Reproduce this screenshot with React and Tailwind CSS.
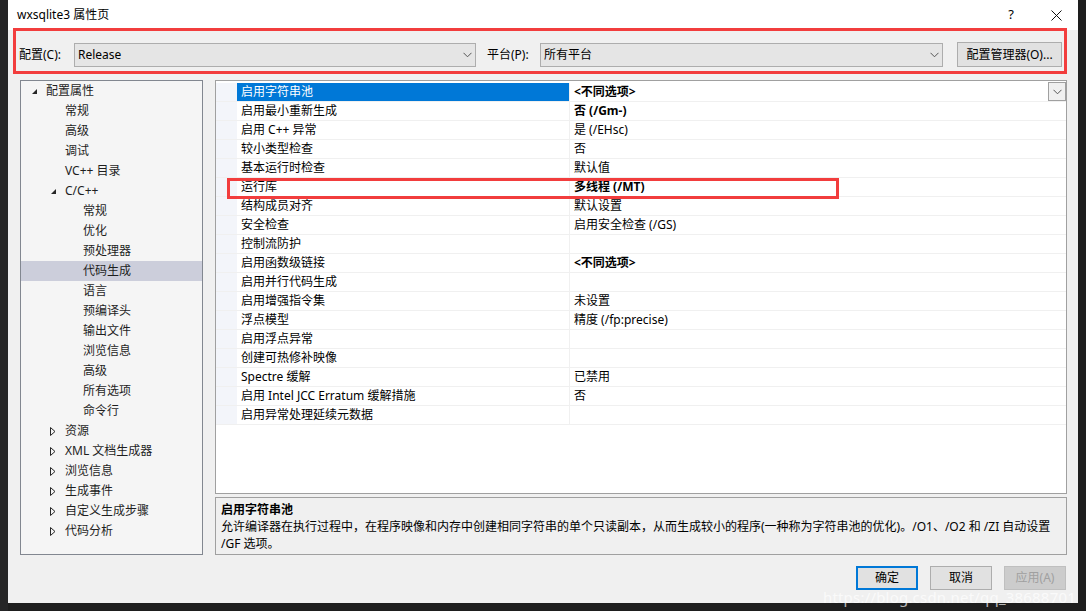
import React from 'react';

const FONT = { fontFamily: '"Noto Sans", "Noto Sans CJK SC", sans-serif' };

const tree = [
  { label: '配置属性', level: 0, arrow: 'open' },
  { label: '常规', level: 1 },
  { label: '高级', level: 1 },
  { label: '调试', level: 1 },
  { label: 'VC++ 目录', level: 1 },
  { label: 'C/C++', level: 1, arrow: 'open' },
  { label: '常规', level: 2 },
  { label: '优化', level: 2 },
  { label: '预处理器', level: 2 },
  { label: '代码生成', level: 2, selected: true },
  { label: '语言', level: 2 },
  { label: '预编译头', level: 2 },
  { label: '输出文件', level: 2 },
  { label: '浏览信息', level: 2 },
  { label: '高级', level: 2 },
  { label: '所有选项', level: 2 },
  { label: '命令行', level: 2 },
  { label: '资源', level: 1, arrow: 'closed' },
  { label: 'XML 文档生成器', level: 1, arrow: 'closed' },
  { label: '浏览信息', level: 1, arrow: 'closed' },
  { label: '生成事件', level: 1, arrow: 'closed' },
  { label: '自定义生成步骤', level: 1, arrow: 'closed' },
  { label: '代码分析', level: 1, arrow: 'closed' },
];

const props = [
  { name: '启用字符串池', value: '<不同选项>', bold: true, selected: true },
  { name: '启用最小重新生成', value: '否 (/Gm-)', bold: true },
  { name: '启用 C++ 异常', value: '是 (/EHsc)' },
  { name: '较小类型检查', value: '否' },
  { name: '基本运行时检查', value: '默认值' },
  { name: '运行库', value: '多线程 (/MT)', bold: true },
  { name: '结构成员对齐', value: '默认设置' },
  { name: '安全检查', value: '启用安全检查 (/GS)' },
  { name: '控制流防护', value: '' },
  { name: '启用函数级链接', value: '<不同选项>', bold: true },
  { name: '启用并行代码生成', value: '' },
  { name: '启用增强指令集', value: '未设置' },
  { name: '浮点模型', value: '精度 (/fp:precise)' },
  { name: '启用浮点异常', value: '' },
  { name: '创建可热修补映像', value: '' },
  { name: 'Spectre 缓解', value: '已禁用' },
  { name: '启用 Intel JCC Erratum 缓解措施', value: '否' },
  { name: '启用异常处理延续元数据', value: '' },
];

function Chevron({ className = '' }) {
  return (
    <svg width="9" height="6" viewBox="0 0 9 6" className={className}>
      <path d="M0.5 0.8 L4.5 4.8 L8.5 0.8" fill="none" stroke="#555" strokeWidth="1" />
    </svg>
  );
}

function Arrow({ type }) {
  if (type === 'open') {
    return (
      <svg width="7" height="7" viewBox="0 0 7 7">
        <path d="M6 1 L6 6 L1 6 Z" fill="#262626" />
      </svg>
    );
  }
  return (
    <svg width="6" height="9" viewBox="0 0 6 9">
      <path d="M0.5 0.5 L5 4.5 L0.5 8.5 Z" fill="none" stroke="#262626" strokeWidth="1" />
    </svg>
  );
}

function Combo({ value, width }) {
  return (
    <div className={`${width} h-[24px] bg-[#e5e5e5] border border-[#adadad] flex items-center justify-between pl-[3px] pr-[3px]`}>
      <span>{value}</span>
      <Chevron />
    </div>
  );
}

function TreeRow({ item }) {
  const pad = ['pl-[10px]', 'pl-[29px]', 'pl-[47px]'][item.level];
  return (
    <div className={`h-[20px] flex items-center ${pad} ${item.selected ? 'bg-[#cccedb]' : ''}`}>
      <span className="w-[15px] flex items-center">{item.arrow && <Arrow type={item.arrow} />}</span>
      <span>{item.label}</span>
    </div>
  );
}

function PropRow({ row, first }) {
  return (
    <div className="h-[19px] flex border-b border-[#f0f0f0]">
      <div className="w-[21px] bg-[#f3f5fa] shrink-0" />
      <div className={`w-[333px] shrink-0 pl-[4px] flex items-center border-r border-[#f0f0f0] ${row.selected ? 'bg-[#0078d7] text-white' : ''}`}>
        {row.name}
      </div>
      <div className={`flex-1 pl-[4px] flex items-center justify-between ${row.bold ? 'font-bold' : ''}`}>
        <span>{row.value}</span>
        {first && (
          <div className="w-[18px] h-[19px] -mt-px border border-[#a0a0a0] bg-[#f0f0f0] flex items-center justify-center">
            <Chevron />
          </div>
        )}
      </div>
    </div>
  );
}

export default function App() {
  return (
    <div className="w-[1086px] h-[611px] bg-[#1e1e1e] flex overflow-hidden text-[12px] text-black" style={FONT}>
      <div className="w-[8px] bg-[#252526]" />
      <div className="relative w-[1070px] h-[603px] bg-[#f0f0f0] flex flex-col">
        {/* title bar */}
        <div className="h-[30px] bg-white flex items-center justify-between pl-[9px] pr-[16px]">
          <span className="text-[12px]">wxsqlite3 属性页</span>
          <div className="flex items-center gap-[37px]">
            <span className="text-[13px]">?</span>
            <svg width="11" height="11" viewBox="0 0 11 11">
              <path d="M0.5 0.5 L10.5 10.5 M10.5 0.5 L0.5 10.5" stroke="#111" strokeWidth="1" />
            </svg>
          </div>
        </div>

        {/* configuration toolbar */}
        <div className="h-[50px] flex items-start pt-[13px] pl-[11px]">
          <span className="h-[24px] flex items-center w-[55px]">配置(C):</span>
          <Combo value="Release" width="w-[402px]" />
          <span className="h-[24px] flex items-center ml-[11px] w-[53px]">平台(P):</span>
          <Combo value="所有平台" width="w-[403px]" />
          <div className="ml-[14px] w-[105px] h-[25px] -mt-px bg-[#e1e1e1] border border-[#adadad] flex items-center justify-center">
            配置管理器(O)...
          </div>
        </div>
        <div className="absolute left-[5px] top-[28px] w-[1054px] h-[46px] border-[3px] border-[#f23d3d]" />

        {/* tree + property grid */}
        <div className="h-[475px] flex pl-[12px] pr-[11px] gap-[12px]">
          <div className="w-[183px] h-[475px] bg-[#f5f5f5] border border-[#828790] text-[#1e1e1e]">
            {tree.map((item, i) => (
              <TreeRow key={i} item={item} />
            ))}
          </div>
          <div className="flex-1 flex flex-col gap-[3px]">
            <div className="relative h-[414px] bg-white border border-[#a0a0a0] pt-[2px]">
              {props.map((row, i) => (
                <PropRow key={i} row={row} first={i === 0} />
              ))}
              <div className="absolute left-[11px] top-[97px] w-[612px] h-[21px] border-[3px] border-[#f23d3d]" />
            </div>
            <div className="h-[58px] border border-[#a0a0a0] px-[5px] pt-[3px] leading-[17px]">
              <div className="font-bold">启用字符串池</div>
              <div>
                允许编译器在执行过程中，在程序映像和内存中创建相同字符串的单个只读副本，从而生成较小的程序(一种称为字符串池的优化)。/O1、/O2 和 /ZI 自动设置
                <br />
                /GF 选项。
              </div>
            </div>
          </div>
        </div>

        {/* dialog buttons */}
        <div className="flex-1 flex justify-end items-start pt-[11px] pr-[12px] gap-[12px]">
          <div className="w-[62px] h-[24px] border-2 border-[#0078d7] bg-[#e1e1e1] flex items-center justify-center">确定</div>
          <div className="w-[62px] h-[24px] border border-[#adadad] bg-[#e1e1e1] flex items-center justify-center">取消</div>
          <div className="w-[62px] h-[24px] border border-[#bfbfbf] bg-[#cccccc] text-[#a0a0a0] flex items-center justify-center">应用(A)</div>
        </div>

        <div className="absolute right-[2px] bottom-[-2px] text-[15px] leading-[15px] text-white/70 tracking-[0.2px] pointer-events-none">
          https://blog.csdn.net/qq_38688701
        </div>
      </div>
    </div>
  );
}
